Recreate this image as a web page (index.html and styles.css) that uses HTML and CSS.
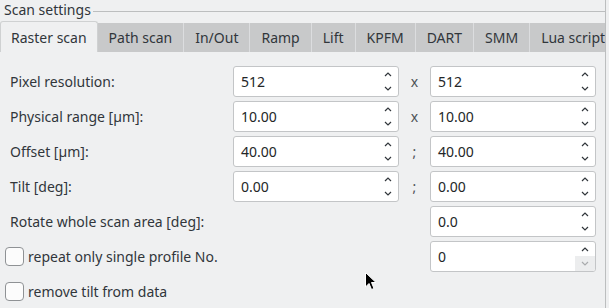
FILE: index.html
```html
<!DOCTYPE html>
<html lang="en">
<head>
    <meta charset="UTF-8">
    <title>Scan settings</title>
    <link rel="stylesheet" href="styles.css">
</head>
<body>
    <div class="group">
        <div class="group-title">
            <span class="title-text">Scan settings</span>
            <span class="title-line"></span>
        </div>

        <div class="tabs">
            <div class="tab active">Raster scan</div>
            <div class="tab">Path scan</div>
            <div class="tab">In/Out</div>
            <div class="tab">Ramp</div>
            <div class="tab">Lift</div>
            <div class="tab">KPFM</div>
            <div class="tab">DART</div>
            <div class="tab">SMM</div>
            <div class="tab">Lua script</div>
        </div>

        <div class="panel">
            <div class="form">
                <label class="field-label">Pixel resolution:</label>
                <div class="spin"><span class="val">512</span><span class="arrows"><svg width="8" height="5"><polyline points="1,4 4,1 7,4"/></svg><svg width="8" height="5"><polyline points="1,1 4,4 7,1"/></svg></span></div>
                <span class="sep">x</span>
                <div class="spin"><span class="val">512</span><span class="arrows"><svg width="8" height="5"><polyline points="1,4 4,1 7,4"/></svg><svg width="8" height="5"><polyline points="1,1 4,4 7,1"/></svg></span></div>

                <label class="field-label">Physical range [µm]:</label>
                <div class="spin"><span class="val">10.00</span><span class="arrows"><svg width="8" height="5"><polyline points="1,4 4,1 7,4"/></svg><svg width="8" height="5"><polyline points="1,1 4,4 7,1"/></svg></span></div>
                <span class="sep">x</span>
                <div class="spin"><span class="val">10.00</span><span class="arrows"><svg width="8" height="5"><polyline points="1,4 4,1 7,4"/></svg><svg width="8" height="5"><polyline points="1,1 4,4 7,1"/></svg></span></div>

                <label class="field-label">Offset [µm]:</label>
                <div class="spin"><span class="val">40.00</span><span class="arrows"><svg width="8" height="5"><polyline points="1,4 4,1 7,4"/></svg><svg width="8" height="5"><polyline points="1,1 4,4 7,1"/></svg></span></div>
                <span class="sep">;</span>
                <div class="spin"><span class="val">40.00</span><span class="arrows"><svg width="8" height="5"><polyline points="1,4 4,1 7,4"/></svg><svg width="8" height="5"><polyline points="1,1 4,4 7,1"/></svg></span></div>

                <label class="field-label">Tilt [deg]:</label>
                <div class="spin"><span class="val">0.00</span><span class="arrows"><svg width="8" height="5"><polyline points="1,4 4,1 7,4"/></svg><svg width="8" height="5"><polyline points="1,1 4,4 7,1"/></svg></span></div>
                <span class="sep">;</span>
                <div class="spin"><span class="val">0.00</span><span class="arrows"><svg width="8" height="5"><polyline points="1,4 4,1 7,4"/></svg><svg width="8" height="5"><polyline points="1,1 4,4 7,1"/></svg></span></div>

                <label class="field-label wide">Rotate whole scan area [deg]:</label>
                <div class="spin"><span class="val">0.0</span><span class="arrows"><svg width="8" height="5"><polyline points="1,4 4,1 7,4"/></svg><svg width="8" height="5"><polyline points="1,1 4,4 7,1"/></svg></span></div>

                <label class="check wide"><span class="box"></span>repeat only single profile No.</label>
                <div class="spin"><span class="val">0</span><span class="arrows"><svg width="8" height="5"><polyline points="1,4 4,1 7,4"/></svg><svg class="disabled" width="8" height="5"><polyline points="1,1 4,4 7,1"/></svg></span><span class="down-off"></span></div>

                <label class="check full"><span class="box"></span>remove tilt from data</label>
            </div>
        </div>

        <svg class="cursor" width="14" height="21" viewBox="0 0 14 21">
            <path d="M1.5 1.5 L1.5 16 L5 12.5 L7.5 18.5 L10 17.5 L7.5 11.5 L12 11.5 Z" fill="#000" stroke="#fff" stroke-width="1"/>
        </svg>
    </div>
</body>
</html>
```

FILE: styles.css
```css
body {
    margin: 0;
    width: 609px;
    height: 308px;
    overflow: hidden;
    background-color: #eff0f1;
    font-family: "Noto Sans", "DejaVu Sans", sans-serif;
    font-size: 14px;
    color: #31363b;
}
.group {
    position: relative;
    width: 605px;
    height: 308px;
    border-right: 1px solid #bcbebf;
}
.group-title {
    display: flex;
    align-items: flex-start;
    height: 21px;
    line-height: 20px;
}
.title-text {
    padding-left: 4px;
    padding-right: 2px;
}
.title-line {
    flex: 1;
    margin-top: 11px;
    border-top: 1px solid #bcbebf;
}
.tabs {
    display: flex;
    align-items: flex-end;
    height: 31px;
    overflow: hidden;
    white-space: nowrap;
}
.tab {
    flex: none;
    height: 29px;
    line-height: 29px;
    padding: 0 11px;
    background-color: #c8c9ca;
    border-left: 1px solid #dcdddf;
}
.tab.active {
    height: 30px;
    line-height: 31px;
    padding: 0 10px 0 10px;
    background-color: #eff0f1;
    border: 1px solid #cfd1d2;
    border-bottom: none;
    border-radius: 3px 3px 0 0;
}
.tab.active + .tab {
    border-left: none;
}
.panel {
    padding: 14px 0 0 10px;
}
.form {
    display: grid;
    grid-template-columns: 223px 166px 31px 166px;
    grid-auto-rows: 31px;
    row-gap: 4px;
    align-items: center;
}
.field-label {
    line-height: 20px;
}
.wide {
    grid-column: 1 / 4;
}
.full {
    grid-column: 1 / 5;
    height: 20px;
}
.spin {
    position: relative;
    box-sizing: border-box;
    height: 31px;
    background-color: #fff;
    border: 1px solid #c3c5c7;
    border-radius: 3px;
    display: flex;
    align-items: center;
    color: #232627;
}
.val {
    flex: 1;
    padding-left: 7px;
}
.arrows {
    display: flex;
    flex-direction: column;
    justify-content: space-between;
    height: 19px;
    margin-right: 6px;
    position: relative;
    z-index: 1;
}
.arrows svg {
    display: block;
}
.arrows polyline {
    fill: none;
    stroke: #31363b;
    stroke-width: 1.2;
}
.arrows svg.disabled polyline {
    stroke: #a9abad;
}
.down-off {
    position: absolute;
    right: 0;
    bottom: 0;
    width: 20px;
    height: 15px;
    background-color: #ecedee;
    border-radius: 0 0 2px 0;
}
.sep {
    text-align: center;
    color: #4d5257;
}
.check {
    display: flex;
    align-items: center;
    margin-left: -5px;
    line-height: 20px;
}
.box {
    box-sizing: border-box;
    width: 19px;
    height: 19px;
    margin-right: 4px;
    border: 1px solid #8f9295;
    border-radius: 4px;
    background-color: #fcfcfc;
}
.cursor {
    position: absolute;
    left: 364px;
    top: 271px;
}
```
